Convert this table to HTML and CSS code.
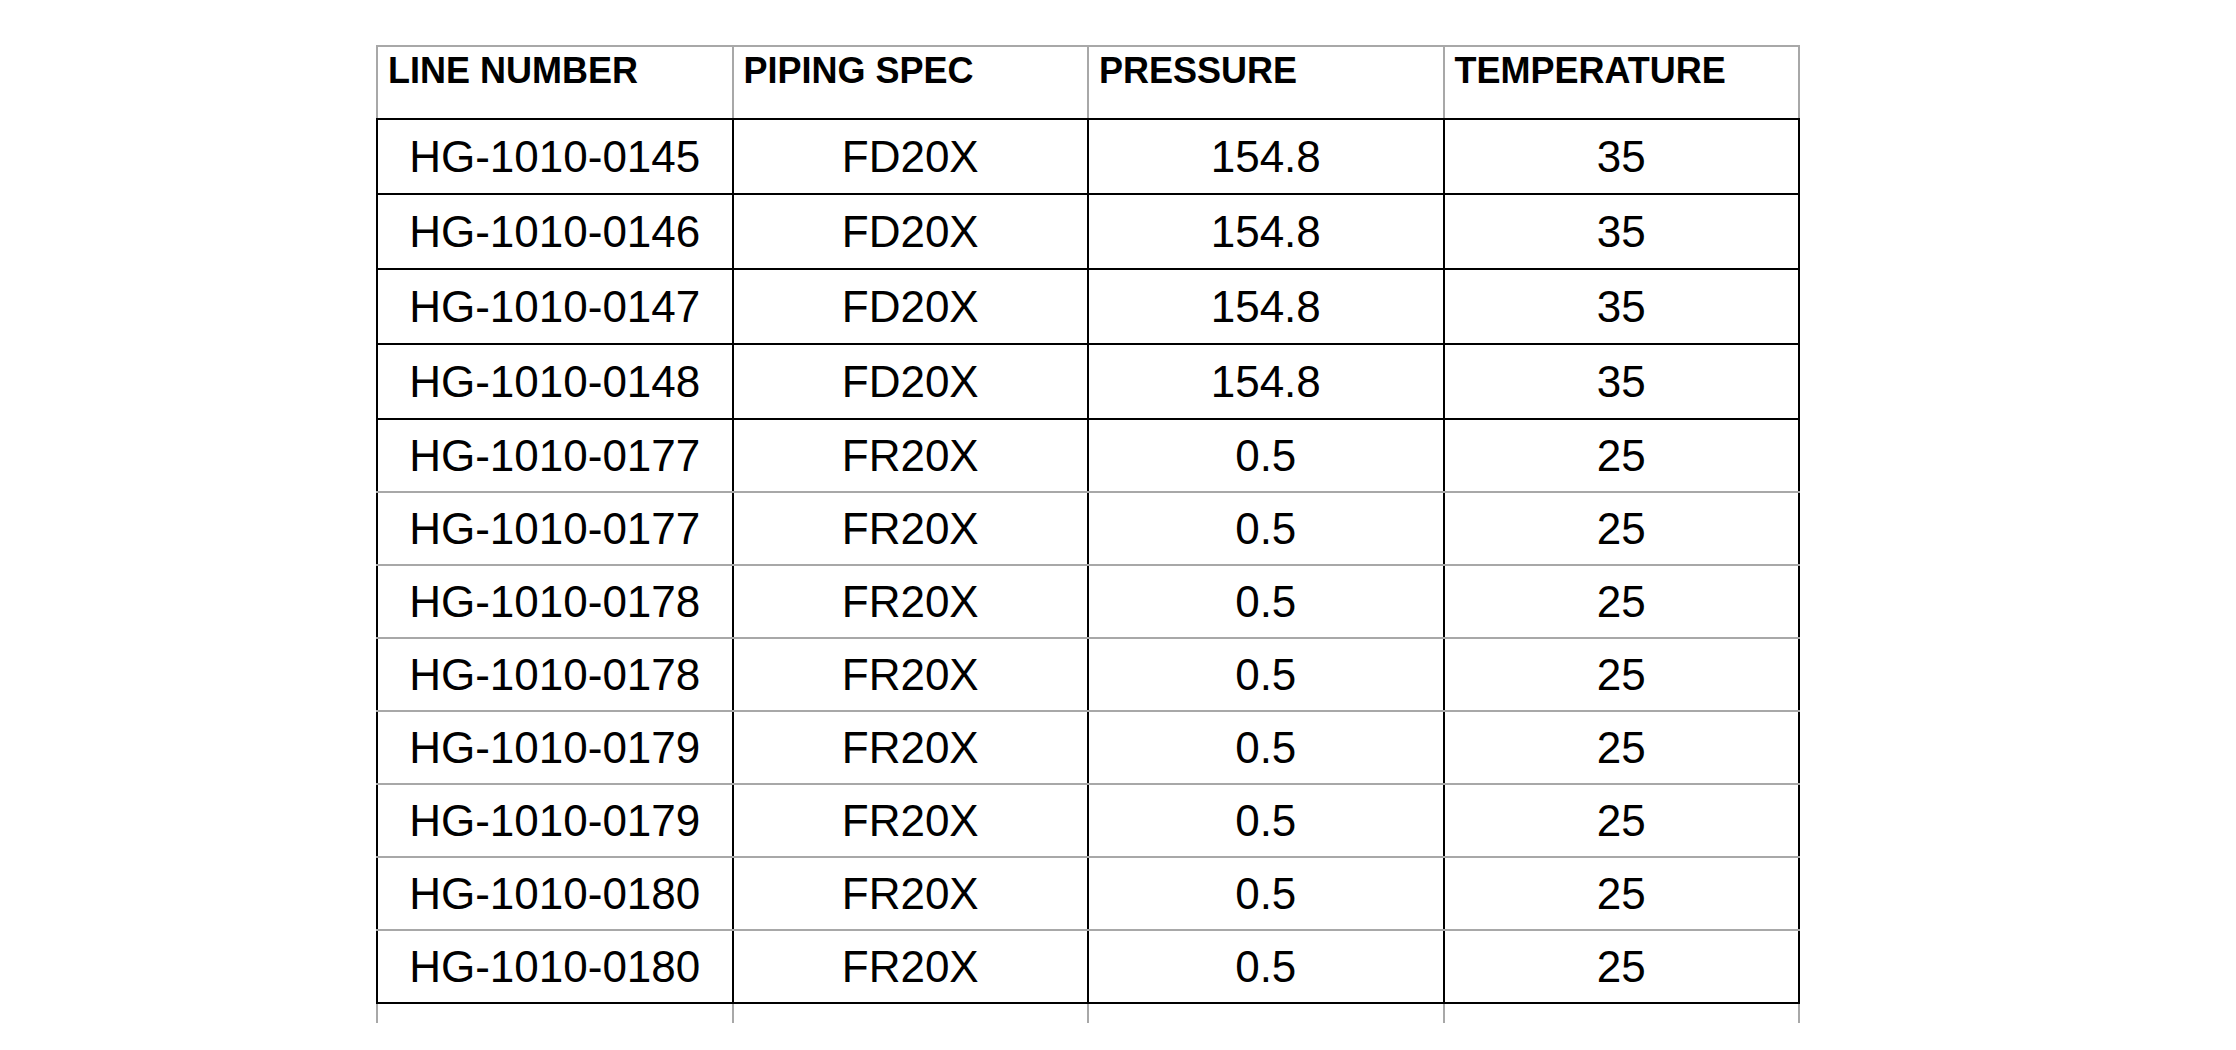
FILE: index.html
```html
<!DOCTYPE html>
<html lang="en">
<head>
<meta charset="utf-8">
<title>Line list</title>
<link rel="stylesheet" href="styles.css">
</head>
<body>
<table class="line-table">
  <thead>
    <tr class="head-row">
      <th>LINE NUMBER</th>
      <th>PIPING SPEC</th>
      <th>PRESSURE</th>
      <th>TEMPERATURE</th>
    </tr>
  </thead>
  <tbody>
    <tr class="row-tall"><td>HG-1010-0145</td><td>FD20X</td><td>154.8</td><td>35</td></tr>
    <tr class="row-tall"><td>HG-1010-0146</td><td>FD20X</td><td>154.8</td><td>35</td></tr>
    <tr class="row-tall"><td>HG-1010-0147</td><td>FD20X</td><td>154.8</td><td>35</td></tr>
    <tr class="row-tall"><td>HG-1010-0148</td><td>FD20X</td><td>154.8</td><td>35</td></tr>
    <tr class="row-soft"><td>HG-1010-0177</td><td>FR20X</td><td>0.5</td><td>25</td></tr>
    <tr class="row-soft"><td>HG-1010-0177</td><td>FR20X</td><td>0.5</td><td>25</td></tr>
    <tr class="row-soft"><td>HG-1010-0178</td><td>FR20X</td><td>0.5</td><td>25</td></tr>
    <tr class="row-soft"><td>HG-1010-0178</td><td>FR20X</td><td>0.5</td><td>25</td></tr>
    <tr class="row-soft"><td>HG-1010-0179</td><td>FR20X</td><td>0.5</td><td>25</td></tr>
    <tr class="row-soft"><td>HG-1010-0179</td><td>FR20X</td><td>0.5</td><td>25</td></tr>
    <tr class="row-soft"><td>HG-1010-0180</td><td>FR20X</td><td>0.5</td><td>25</td></tr>
    <tr class="row-soft row-last"><td>HG-1010-0180</td><td>FR20X</td><td>0.5</td><td>25</td></tr>
    <tr class="row-stub"><td></td><td></td><td></td><td></td></tr>
  </tbody>
</table>
</body>
</html>
```

FILE: styles.css
```css
html, body {
  margin: 0;
  padding: 0;
  background: #ffffff;
}

body {
  font-family: "Liberation Sans", Arial, sans-serif;
  color: #000000;
}

.line-table {
  border-collapse: collapse;
  table-layout: fixed;
  width: 1424px;
  margin: 45px 0 0 376px;
}

.line-table th,
.line-table td {
  width: 25%;
  padding: 0;
}

.head-row th {
  height: 67px;
  padding: 4px 10px 0 10px;
  vertical-align: top;
  text-align: left;
  font-weight: bold;
  font-size: 36px;
  line-height: 40px;
  border: 2px solid #a8a8a8;
  border-bottom: 2px solid #000000;
}

.line-table td {
  text-align: center;
  vertical-align: middle;
  font-size: 44px;
  line-height: 50px;
  border-left: 2px solid #000000;
  border-right: 2px solid #000000;
}

.row-tall td {
  height: 73px;
  border-top: 2px solid #000000;
  border-bottom: 2px solid #000000;
}

.row-soft td {
  height: 71px;
  border-top: 2px solid #a8a8a8;
  border-bottom: 2px solid #a8a8a8;
}

.row-soft.row-last td {
  border-bottom: 2px solid #000000;
}

.row-stub td {
  height: 19px;
  line-height: 19px;
  border-left: 2px solid #a8a8a8;
  border-right: 2px solid #a8a8a8;
  border-bottom: none;
}
```
